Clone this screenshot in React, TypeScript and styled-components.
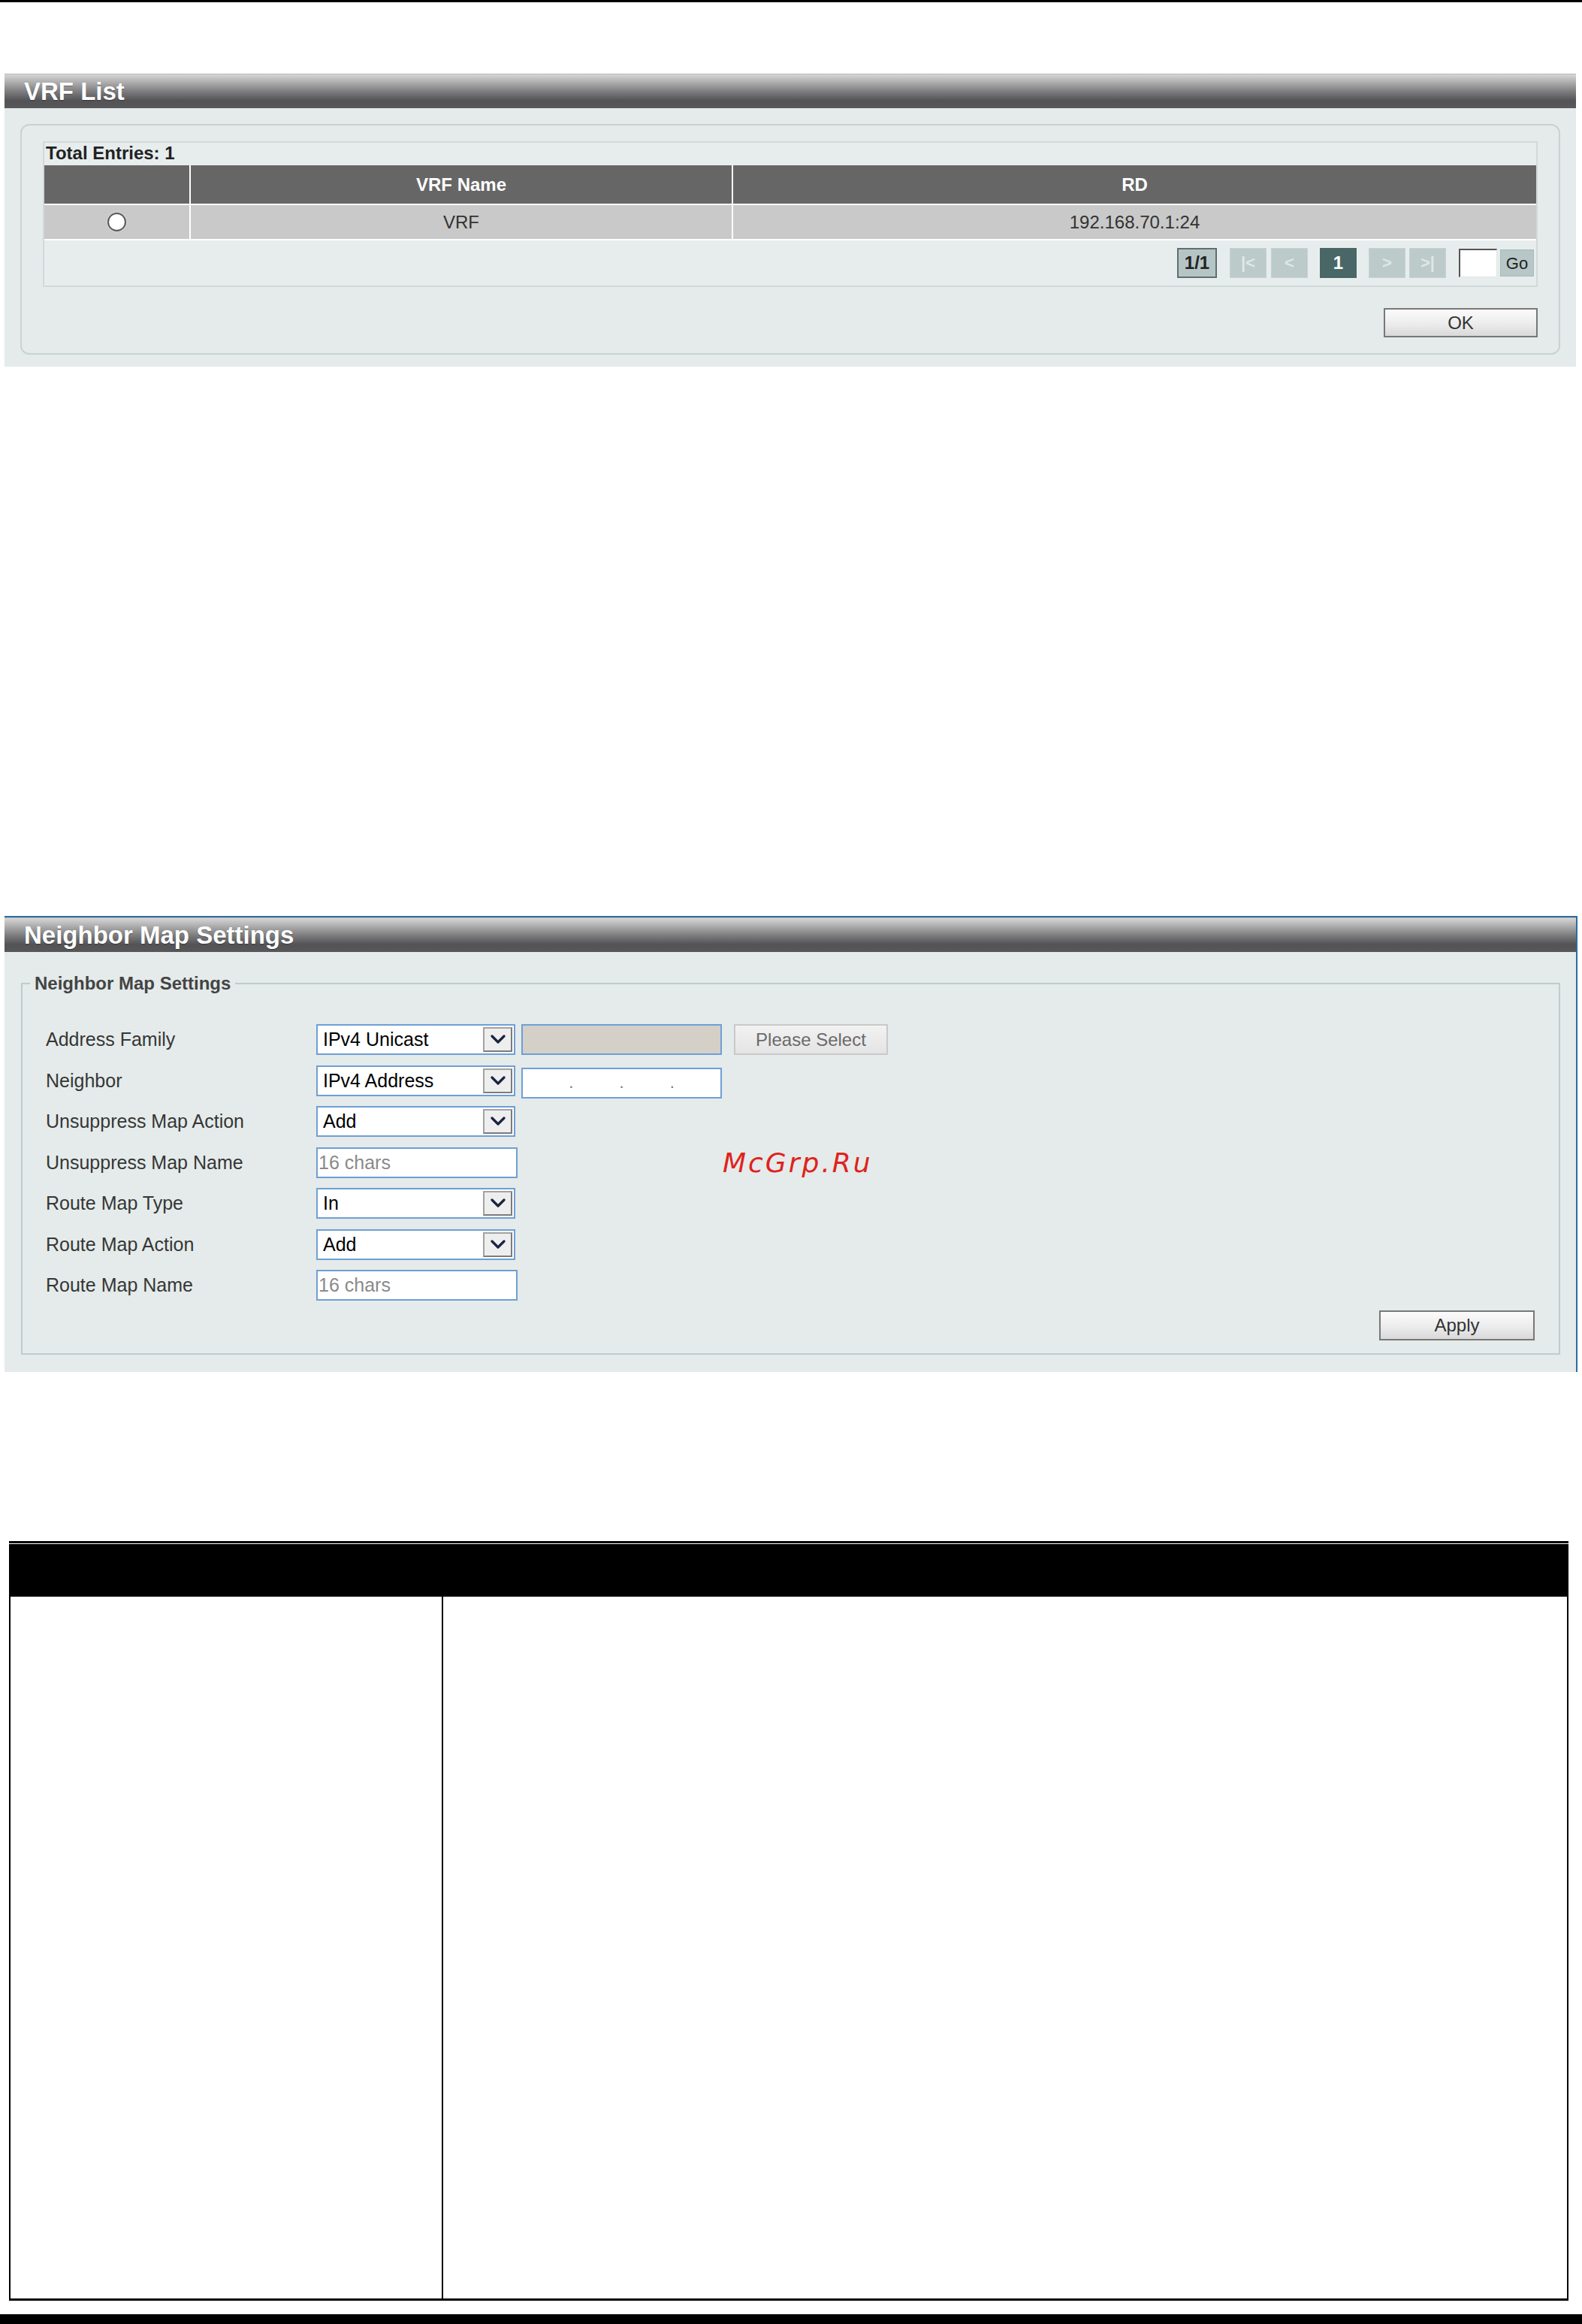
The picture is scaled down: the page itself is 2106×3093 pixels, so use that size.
import React from 'react';
import styled, { createGlobalStyle } from 'styled-components';

const GlobalStyle = createGlobalStyle`
  html, body {
    margin: 0;
    padding: 0;
    background: #ffffff;
  }
  body {
    font-family: 'Liberation Sans', Arial, sans-serif;
  }
  * {
    box-sizing: border-box;
  }
`;

const Page = styled.div`
  width: 2106px;
  height: 3093px;
  display: flex;
  flex-direction: column;
  overflow: hidden;
`;

const TopRule = styled.div`
  height: 3px;
  background: #000;
`;

const Panel = styled.section<{ $top: number; $accent?: boolean }>`
  margin: ${(p) => p.$top}px ${(p) => (p.$accent ? 6 : 8)}px 0 6px;
  border-top: ${(p) => (p.$accent ? '2px solid #2d6ca3' : 'none')};
  border-right: ${(p) => (p.$accent ? '2px solid #2d6ca3' : 'none')};
  background: #e4ebea;
`;

const PanelHeader = styled.div<{ $h: number }>`
  height: ${(p) => p.$h}px;
  line-height: ${(p) => p.$h}px;
  padding-left: 26px;
  border-top: 1px solid #b9b9b9;
  background: linear-gradient(
    to bottom,
    #d6d6d6 0%,
    #b0b0b0 22%,
    #7e7e80 50%,
    #535355 78%,
    #58585a 100%
  );
  color: #ffffff;
  font-weight: bold;
  font-size: 33px;
  text-shadow: 0 1px 1px rgba(0, 0, 0, 0.35);
`;

const PanelBody = styled.div<{ $pad: string }>`
  padding: ${(p) => p.$pad};
`;

/* ---------- VRF list ---------- */

const RoundBox = styled.div`
  border: 2px solid #c9d2d2;
  border-radius: 12px;
  padding: 21px 28px 21px 28px;
  display: flex;
  flex-direction: column;
`;

const TableWrap = styled.div`
  border: 2px solid #d2d9d9;
  background: #e7eded;
`;

const TotalRow = styled.div`
  height: 30px;
  padding: 0 0 0 2px;
  font-size: 24px;
  font-weight: bold;
  color: #222;
`;

const Cols = styled.div<{ $bg: string; $h: number }>`
  display: grid;
  grid-template-columns: 195px 722px 1fr;
  height: ${(p) => p.$h}px;
  background: ${(p) => p.$bg};
  border-bottom: 2px solid #ffffff;
`;

const Cell = styled.div<{ $head?: boolean; $last?: boolean }>`
  display: flex;
  align-items: center;
  justify-content: center;
  border-right: ${(p) => (p.$last ? 'none' : '2px solid #ffffff')};
  color: ${(p) => (p.$head ? '#ffffff' : '#333333')};
  font-weight: ${(p) => (p.$head ? 'bold' : 'normal')};
  font-size: 24px;
`;

const Radio = styled.span`
  width: 25px;
  height: 25px;
  border-radius: 50%;
  border: 2px solid #5a5a5a;
  background: radial-gradient(circle at 45% 40%, #ffffff 55%, #e6e6e6 100%);
  box-shadow: 0 0 2px rgba(255, 255, 255, 0.8);
`;

const PagerRow = styled.div`
  height: 60px;
  display: flex;
  justify-content: flex-end;
  align-items: center;
  padding-right: 3px;
`;

const PageBox = styled.span<{ $kind: 'info' | 'off' | 'current'; $gap: number }>`
  height: 40px;
  min-width: ${(p) => (p.$kind === 'info' ? 53 : 49)}px;
  margin-left: ${(p) => p.$gap}px;
  display: inline-flex;
  align-items: center;
  justify-content: center;
  font-size: ${(p) => (p.$kind === 'off' ? 22 : 24)}px;
  font-weight: bold;
  background: ${(p) =>
    p.$kind === 'current' ? '#4a6767' : p.$kind === 'info' ? '#b5c5c5' : '#bccaca'};
  border: ${(p) =>
    p.$kind === 'info' ? '2px solid #5f6e6e' : p.$kind === 'off' ? '1px solid #c6d2d2' : '1px solid #4a6767'};
  color: ${(p) => (p.$kind === 'current' ? '#ffffff' : p.$kind === 'info' ? '#222222' : '#dfe7e7')};
`;

const PageInput = styled.input`
  width: 51px;
  height: 38px;
  margin-left: 17px;
  border-top: 2px solid #555;
  border-left: 2px solid #555;
  border-right: 1px solid #e4e4e4;
  border-bottom: 1px solid #e4e4e4;
  background: #fff;
  padding: 0;
  outline: none;
`;

const GoButton = styled.span`
  width: 45px;
  height: 36px;
  margin-left: 4px;
  display: inline-flex;
  align-items: flex-end;
  justify-content: center;
  padding-bottom: 3px;
  background: #b7c7c7;
  border: 1px solid #a9b9b9;
  color: #222;
  font-size: 22px;
`;

const ActionRow = styled.div<{ $mt: number }>`
  display: flex;
  justify-content: flex-end;
  margin-top: ${(p) => p.$mt}px;
`;

const FormButton = styled.button<{ $w: number; $h: number }>`
  width: ${(p) => p.$w}px;
  height: ${(p) => p.$h}px;
  border: 2px solid #787878;
  background: linear-gradient(to bottom, #fbfbfb 0%, #ececec 55%, #d9d9d9 100%);
  font-family: 'Liberation Sans', Arial, sans-serif;
  font-size: 24px;
  color: #333;
  padding: 0;
`;

/* ---------- Neighbor map settings ---------- */

const Fieldset = styled.fieldset`
  position: relative;
  margin: 0;
  border: 2px solid #c0cccc;
  padding: 40px 32px 17px 10px;
  min-width: 0;
`;

const Legend = styled.legend`
  padding: 0 6px;
  font-size: 24px;
  font-weight: bold;
  color: #444;
  line-height: 28px;
`;

const FormGrid = styled.div`
  display: grid;
  grid-template-columns: 360px 1fr;
  grid-auto-rows: 41px;
  row-gap: 13.5px;
  margin-left: 21px;
`;

const Label = styled.div`
  display: flex;
  align-items: center;
  font-size: 25px;
  color: #363636;
`;

const Controls = styled.div`
  display: flex;
  align-items: center;
`;

const Select = styled.div`
  width: 265px;
  height: 41px;
  display: flex;
  align-items: center;
  justify-content: space-between;
  border: 2px solid #6f9fd6;
  background: #ffffff;
  padding: 0 2px 0 7px;
  font-size: 25px;
  color: #000;
`;

const ArrowBox = styled.span`
  width: 39px;
  height: 33px;
  display: inline-flex;
  align-items: center;
  justify-content: center;
  background: #eeeeee;
  border: 2px solid #a2a2a2;
  border-right-color: #7c7c7c;
  border-bottom-color: #7c7c7c;
`;

const TextBox = styled.input<{ $w: number; $fill?: string }>`
  width: ${(p) => p.$w}px;
  height: 41px;
  border: 2px solid #6f9fd6;
  background: ${(p) => p.$fill ?? '#ffffff'};
  padding: 0 0 0 1px;
  margin: 0;
  font-family: 'Liberation Sans', Arial, sans-serif;
  font-size: 25px;
  color: #000;
  outline: none;
  &::placeholder {
    color: #8a8a8a;
  }
`;

const IpBox = styled.div`
  width: 267px;
  height: 41px;
  margin-left: 8px;
  margin-top: 6px;
  border: 2px solid #6f9fd6;
  background: #ffffff;
  display: flex;
  align-items: center;
  justify-content: space-evenly;
  font-size: 22px;
  color: #777;
`;

const SelectButton = styled.button`
  width: 205px;
  height: 41px;
  margin-left: 16px;
  border: 2px solid #c9c9c9;
  background: linear-gradient(to bottom, #f2f2f2, #e4e4e4);
  font-family: 'Liberation Sans', Arial, sans-serif;
  font-size: 24px;
  color: #6a6a6a;
  padding: 0;
`;

const Watermark = styled.span`
  position: absolute;
  left: 932px;
  top: 204px;
  font-family: 'DejaVu Sans', sans-serif;
  font-style: italic;
  font-size: 36px;
  letter-spacing: 3px;
  color: #e0221c;
`;

/* ---------- parameter table ---------- */

const DocTable = styled.div`
  margin: 225px 0 0 12px;
  width: 2076px;
  border-top: 3px solid #000;
  border-bottom: 3px solid #000;
  padding-top: 1px;
  display: grid;
  grid-template-columns: 576px 1fr;
  grid-template-rows: 70px 934px;
`;

const DocHead = styled.div`
  background: #000;
`;

const DocCell = styled.div<{ $first?: boolean }>`
  border-left: 2px solid #000;
  border-right: ${(p) => (p.$first ? 'none' : '2px solid #000')};
`;

const FooterBar = styled.div`
  margin-top: auto;
  height: 13px;
  background: #000;
`;

const Chevron = () => (
  <svg width="20" height="13" viewBox="0 0 20 13">
    <path d="M2 2 L10 10 L18 2" fill="none" stroke="#1a2340" strokeWidth="3.2" strokeLinecap="round" strokeLinejoin="round" />
  </svg>
);

const Dropdown: React.FC<{ value: string }> = ({ value }) => (
  <Select>
    <span>{value}</span>
    <ArrowBox>
      <Chevron />
    </ArrowBox>
  </Select>
);

const pager: { label: string; kind: 'info' | 'off' | 'current'; gap: number }[] = [
  { label: '1/1', kind: 'info', gap: 0 },
  { label: '|<', kind: 'off', gap: 17 },
  { label: '<', kind: 'off', gap: 6 },
  { label: '1', kind: 'current', gap: 16 },
  { label: '>', kind: 'off', gap: 16 },
  { label: '>|', kind: 'off', gap: 5 },
];

export default function App() {
  return (
    <Page>
      <GlobalStyle />
      <TopRule />

      <Panel $top={95}>
        <PanelHeader $h={46}>VRF List</PanelHeader>
        <PanelBody $pad="21px 21px 16px 21px">
          <RoundBox>
            <TableWrap>
              <TotalRow>Total Entries: 1</TotalRow>
              <Cols $bg="#666666" $h={53}>
                <Cell $head />
                <Cell $head>VRF Name</Cell>
                <Cell $head $last>RD</Cell>
              </Cols>
              <Cols $bg="#c9c9c9" $h={47}>
                <Cell>
                  <Radio />
                </Cell>
                <Cell>VRF</Cell>
                <Cell $last>192.168.70.1:24</Cell>
              </Cols>
              <PagerRow>
                {pager.map((p, i) => (
                  <PageBox key={i} $kind={p.kind} $gap={p.gap}>
                    {p.label}
                  </PageBox>
                ))}
                <PageInput />
                <GoButton>Go</GoButton>
              </PagerRow>
            </TableWrap>
            <ActionRow $mt={28}>
              <FormButton $w={205} $h={39}>OK</FormButton>
            </ActionRow>
          </RoundBox>
        </PanelBody>
      </Panel>

      <Panel $top={731} $accent>
        <PanelHeader $h={46}>Neighbor Map Settings</PanelHeader>
        <PanelBody $pad="28px 21px 23px 22px">
          <Fieldset>
            <Legend>Neighbor Map Settings</Legend>
            <FormGrid>
              <Label>Address Family</Label>
              <Controls>
                <Dropdown value="IPv4 Unicast" />
                <TextBox $w={267} $fill="#d4d0c8" style={{ marginLeft: 8 }} disabled />
                <SelectButton>Please Select</SelectButton>
              </Controls>

              <Label>Neighbor</Label>
              <Controls>
                <Dropdown value="IPv4 Address" />
                <IpBox>
                  <span>.</span>
                  <span>.</span>
                  <span>.</span>
                </IpBox>
              </Controls>

              <Label>Unsuppress Map Action</Label>
              <Controls>
                <Dropdown value="Add" />
              </Controls>

              <Label>Unsuppress Map Name</Label>
              <Controls>
                <TextBox $w={268} placeholder="16 chars" />
              </Controls>

              <Label>Route Map Type</Label>
              <Controls>
                <Dropdown value="In" />
              </Controls>

              <Label>Route Map Action</Label>
              <Controls>
                <Dropdown value="Add" />
              </Controls>

              <Label>Route Map Name</Label>
              <Controls>
                <TextBox $w={268} placeholder="16 chars" />
              </Controls>
            </FormGrid>
            <ActionRow $mt={13}>
              <FormButton $w={207} $h={40}>Apply</FormButton>
            </ActionRow>
            <Watermark>McGrp.Ru</Watermark>
          </Fieldset>
        </PanelBody>
      </Panel>

      <DocTable>
        <DocHead />
        <DocHead />
        <DocCell $first />
        <DocCell />
      </DocTable>

      <FooterBar />
    </Page>
  );
}
